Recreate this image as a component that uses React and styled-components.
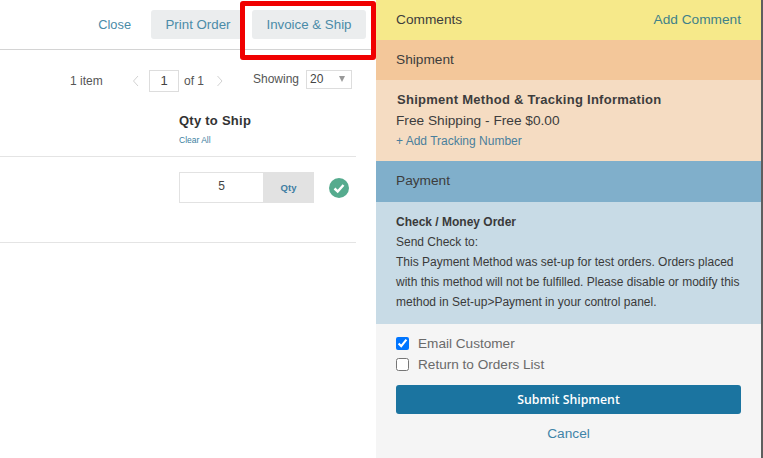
import styled, { createGlobalStyle } from "styled-components";

const GlobalStyle = createGlobalStyle`
  html, body {
    margin: 0;
    padding: 0;
    background: #ffffff;
  }
  body {
    font-family: "Liberation Sans", Arial, sans-serif;
  }
`;

const Page = styled.div`
  position: relative;
  display: flex;
  width: 763px;
  height: 458px;
  overflow: hidden;
`;

const Main = styled.div`
  width: 376px;
  flex: none;
`;

const TopBar = styled.div`
  display: flex;
  align-items: center;
  justify-content: flex-end;
  gap: 7px;
  height: 50px;
  padding: 0 10px 1px 0;
  box-sizing: border-box;
  border-bottom: 1px solid #d4d4d4;
`;

const TopLink = styled.a`
  margin-right: 13px;
  font-size: 12.8px;
  color: #4a8ba8;
`;

const TopButton = styled.button`
  width: ${(p) => p.$width}px;
  height: 29px;
  padding: 0;
  border: 0;
  border-radius: 3px;
  background: #ebedee;
  color: #4a8ba8;
  font: 13.3px "Liberation Sans", Arial, sans-serif;
`;

const Pager = styled.div`
  display: flex;
  align-items: center;
  height: 61px;
  padding-left: 70px;
  box-sizing: border-box;
  font-size: 12px;
  color: #555555;
`;

const ItemCount = styled.span`
  width: 63px;
`;

const Chevron = styled.svg`
  width: 8px;
  height: 12px;
  fill: none;
  stroke: #d2d2d2;
  stroke-width: 1;
`;

const PageBox = styled.div`
  width: 30px;
  height: 22px;
  margin: 0 5px 0 8px;
  box-sizing: border-box;
  border: 1px solid #dddddd;
  text-align: center;
  line-height: 19px;
  font-size: 13px;
  color: #444444;
`;

const OfLabel = styled.span`
  width: 33px;
`;

const ShowingLabel = styled.span`
  width: 53px;
  margin: 0 0 3px 28px;
`;

const PageSize = styled.div`
  display: flex;
  align-items: center;
  justify-content: space-between;
  width: 46px;
  height: 19px;
  margin-bottom: 3px;
  padding: 0 6px 0 3px;
  box-sizing: border-box;
  border: 1px solid #dddddd;
  color: #444444;
`;

const Arrow = styled.span`
  width: 0;
  height: 0;
  border-left: 3px solid transparent;
  border-right: 3px solid transparent;
  border-top: 6px solid #999999;
`;

const TableHead = styled.div`
  width: 356px;
  height: 46px;
  padding: 2px 0 0 179px;
  box-sizing: border-box;
  border-bottom: 1px solid #e4e4e4;
`;

const QtyTitle = styled.div`
  font-size: 13px;
  font-weight: 700;
  line-height: 16px;
  letter-spacing: 0.25px;
  color: #333333;
`;

const ClearAll = styled.a`
  display: block;
  margin-top: 6px;
  font-size: 8.5px;
  color: #3d7f9f;
`;

const TableRow = styled.div`
  display: flex;
  align-items: flex-start;
  width: 356px;
  height: 86px;
  padding: 15px 0 0 179px;
  box-sizing: border-box;
  border-bottom: 1px solid #e4e4e4;
`;

const QtyInput = styled.div`
  width: 84px;
  height: 31px;
  box-sizing: border-box;
  border: 1px solid #e2e2e2;
  border-right: 0;
  text-align: center;
  font-size: 12px;
  line-height: 26px;
  color: #444444;
`;

const QtyAddon = styled.div`
  width: 51px;
  height: 31px;
  background: #e2e2e2;
  text-align: center;
  font-size: 9.5px;
  font-weight: 700;
  line-height: 32px;
  color: #3f7ea3;
`;

const CheckIcon = styled.svg`
  width: 20px;
  height: 20px;
  margin: 6px 0 0 15px;
`;

const Side = styled.div`
  display: flex;
  flex-direction: column;
  width: 387px;
  flex: none;
  box-sizing: border-box;
  border-right: 2px solid #5e5e5e;
  background: #f5f5f5;
`;

const Band = styled.div`
  display: flex;
  align-items: center;
  justify-content: space-between;
  height: ${(p) => p.$height}px;
  padding: 0 20px 2px;
  box-sizing: border-box;
  background: ${(p) => p.$bg};
  font-size: 13.7px;
  color: #3d3d3d;
`;

const AddComment = styled.a`
  color: #3f8189;
`;

const ShipmentBody = styled.div`
  height: 81px;
  padding: 12px 20px 0 21px;
  box-sizing: border-box;
  background: #f5dcc2;
  color: #3d3d3d;
`;

const ShipmentTitle = styled.div`
  font-size: 13px;
  font-weight: 700;
  line-height: 16px;
  letter-spacing: 0.27px;
`;

const ShipmentLine = styled.div`
  margin: 5px 0 0 -1px;
  font-size: 13.7px;
  line-height: 16px;
`;

const TrackingLink = styled.a`
  display: block;
  margin: 5px 0 0 -1px;
  font-size: 12px;
  line-height: 14px;
  color: #4a7f9c;
`;

const PaymentBody = styled.div`
  height: 122px;
  padding: 10px 20px 0;
  box-sizing: border-box;
  background: #c8dbe6;
  font-size: 12px;
  line-height: 20px;
  color: #3a3a3a;
`;

const PaymentTitle = styled.div`
  font-weight: 700;
`;

const Options = styled.div`
  padding: 9px 20px 0;
`;

const CheckRow = styled.label`
  display: flex;
  align-items: center;
  gap: 9px;
  height: 21px;
  font-size: 13.6px;
  color: #6a6a6a;
`;

const Box = styled.input`
  width: 13px;
  height: 13px;
  margin: 0;
`;

const SubmitButton = styled.button`
  display: block;
  width: 345px;
  height: 29px;
  margin-top: 10px;
  border: 0;
  border-radius: 3px;
  background: #1b74a0;
  color: #ffffff;
  font: 600 12.3px "Open Sans", "Liberation Sans", sans-serif;
`;

const CancelLink = styled.a`
  display: block;
  margin-top: 12px;
  text-align: center;
  font-size: 13.7px;
  color: #3f84a8;
`;

const Highlight = styled.div`
  position: absolute;
  left: 240px;
  top: 1px;
  width: 136px;
  height: 59px;
  box-sizing: border-box;
  border: 5px solid #f00000;
  border-radius: 3px;
`;

const App = () => (
  <Page>
    <GlobalStyle />
    <Main>
      <TopBar>
        <TopLink>Close</TopLink>
        <TopButton $width={94}>Print Order</TopButton>
        <TopButton $width={114}>Invoice &amp; Ship</TopButton>
      </TopBar>
      <Pager>
        <ItemCount>1 item</ItemCount>
        <Chevron viewBox="0 0 8 12">
          <path d="M5 1 .5 6 5 11" />
        </Chevron>
        <PageBox>1</PageBox>
        <OfLabel>of 1</OfLabel>
        <Chevron viewBox="0 0 8 12">
          <path d="M.5 1 5 6 .5 11" />
        </Chevron>
        <ShowingLabel>Showing</ShowingLabel>
        <PageSize>
          20
          <Arrow />
        </PageSize>
      </Pager>
      <TableHead>
        <QtyTitle>Qty to Ship</QtyTitle>
        <ClearAll>Clear All</ClearAll>
      </TableHead>
      <TableRow>
        <QtyInput>5</QtyInput>
        <QtyAddon>Qty</QtyAddon>
        <CheckIcon viewBox="0 0 20 20">
          <circle cx="10" cy="10" r="10" fill="#55ab8e" />
          <path d="M5.5 10.5 8.7 13.5 14.5 7" fill="none" stroke="#ffffff" strokeWidth="2.4" />
        </CheckIcon>
      </TableRow>
    </Main>
    <Side>
      <Band $height={40} $bg="#f6e98a">
        Comments
        <AddComment>Add Comment</AddComment>
      </Band>
      <Band $height={40} $bg="#f3c79a">Shipment</Band>
      <ShipmentBody>
        <ShipmentTitle>Shipment Method &amp; Tracking Information</ShipmentTitle>
        <ShipmentLine>Free Shipping - Free $0.00</ShipmentLine>
        <TrackingLink>+ Add Tracking Number</TrackingLink>
      </ShipmentBody>
      <Band $height={41} $bg="#80afcb">Payment</Band>
      <PaymentBody>
        <PaymentTitle>Check / Money Order</PaymentTitle>
        <div>Send Check to:</div>
        <div>
          This Payment Method was set-up for test orders. Orders placed
          <br />
          with this method will not be fulfilled. Please disable or modify this
          <br />
          method in Set-up&gt;Payment in your control panel.
        </div>
      </PaymentBody>
      <Options>
        <CheckRow>
          <Box type="checkbox" defaultChecked />
          Email Customer
        </CheckRow>
        <CheckRow>
          <Box type="checkbox" />
          Return to Orders List
        </CheckRow>
        <SubmitButton>Submit Shipment</SubmitButton>
        <CancelLink>Cancel</CancelLink>
      </Options>
    </Side>
    <Highlight />
  </Page>
);

export default App;
